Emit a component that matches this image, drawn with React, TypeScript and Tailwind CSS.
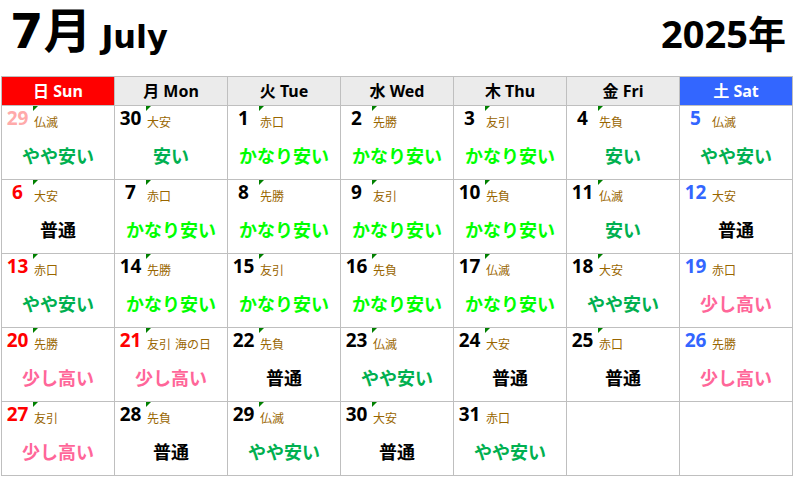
type Day = {
  n: number;
  rokuyo?: string;
  holiday?: string;
  price?: string;
  color?: string;
  mark?: boolean;
};

const priceColor: Record<string, string> = {
  "やや安い": "text-[#00b050]",
  "安い": "text-[#00b050]",
  "かなり安い": "text-[#00ff00]",
  "普通": "text-black",
  "少し高い": "text-[#ff6699]",
};

const heads = [
  { label: "日 Sun", cls: "bg-[#ff0000] text-white" },
  { label: "月 Mon", cls: "bg-[#ebebeb] text-black" },
  { label: "火 Tue", cls: "bg-[#ebebeb] text-black" },
  { label: "水 Wed", cls: "bg-[#ebebeb] text-black" },
  { label: "木 Thu", cls: "bg-[#ebebeb] text-black" },
  { label: "金 Fri", cls: "bg-[#ebebeb] text-black" },
  { label: "土 Sat", cls: "bg-[#3366ff] text-white" },
];

const RED = "text-[#ff0000]";
const BLUE = "text-[#3366ff]";

const weeks: (Day | null)[][] = [
  [
    { n: 29, rokuyo: "仏滅", price: "やや安い", color: "text-[#ffaaaa]", mark: true },
    { n: 30, rokuyo: "大安", price: "安い", mark: true },
    { n: 1, rokuyo: "赤口", price: "かなり安い", mark: true },
    { n: 2, rokuyo: "先勝", price: "かなり安い", mark: true },
    { n: 3, rokuyo: "友引", price: "かなり安い", mark: true },
    { n: 4, rokuyo: "先負", price: "安い", mark: true },
    { n: 5, rokuyo: "仏滅", price: "やや安い", color: BLUE },
  ],
  [
    { n: 6, rokuyo: "大安", price: "普通", color: RED, mark: true },
    { n: 7, rokuyo: "赤口", price: "かなり安い", mark: true },
    { n: 8, rokuyo: "先勝", price: "かなり安い", mark: true },
    { n: 9, rokuyo: "友引", price: "かなり安い", mark: true },
    { n: 10, rokuyo: "先負", price: "かなり安い", mark: true },
    { n: 11, rokuyo: "仏滅", price: "安い", mark: true },
    { n: 12, rokuyo: "大安", price: "普通", color: BLUE },
  ],
  [
    { n: 13, rokuyo: "赤口", price: "やや安い", color: RED, mark: true },
    { n: 14, rokuyo: "先勝", price: "かなり安い", mark: true },
    { n: 15, rokuyo: "友引", price: "かなり安い", mark: true },
    { n: 16, rokuyo: "先負", price: "かなり安い", mark: true },
    { n: 17, rokuyo: "仏滅", price: "かなり安い", mark: true },
    { n: 18, rokuyo: "大安", price: "やや安い", mark: true },
    { n: 19, rokuyo: "赤口", price: "少し高い", color: BLUE },
  ],
  [
    { n: 20, rokuyo: "先勝", price: "少し高い", color: RED, mark: true },
    { n: 21, rokuyo: "友引", holiday: "海の日", price: "少し高い", color: RED, mark: true },
    { n: 22, rokuyo: "先負", price: "普通", mark: true },
    { n: 23, rokuyo: "仏滅", price: "やや安い", mark: true },
    { n: 24, rokuyo: "大安", price: "普通", mark: true },
    { n: 25, rokuyo: "赤口", price: "普通", mark: true },
    { n: 26, rokuyo: "先勝", price: "少し高い", color: BLUE },
  ],
  [
    { n: 27, rokuyo: "友引", price: "少し高い", color: RED, mark: true },
    { n: 28, rokuyo: "先負", price: "普通", mark: true },
    { n: 29, rokuyo: "仏滅", price: "やや安い", mark: true },
    { n: 30, rokuyo: "大安", price: "普通", mark: true },
    { n: 31, rokuyo: "赤口", price: "やや安い" },
    null,
    null,
  ],
];

function Cell({ day }: { day: Day | null }) {
  if (!day) return <div className="bg-white h-[73px]" />;
  return (
    <div className="relative bg-white h-[73px]">
      {day.mark && (
        <span className="absolute left-[31px] top-0 w-[5px] h-[5px] bg-[#008000] [clip-path:polygon(0_0,100%_0,0_100%)]" />
      )}
      <div className="flex items-baseline h-[24px] leading-[24px]">
        <span className={`w-[25px] ml-[3px] text-center text-[19px] font-bold ${day.color ?? "text-black"}`}>
          {day.n}
        </span>
        <span className="ml-[4px] text-[12px] text-[#996600] translate-y-[2px]">
          {day.rokuyo}
          {day.holiday && <span className="ml-[4px]">{day.holiday}</span>}
        </span>
      </div>
      {day.price && (
        <div className={`mt-[14px] text-center text-[18px] leading-[24px] font-bold ${priceColor[day.price]}`}>
          {day.price}
        </div>
      )}
    </div>
  );
}

export default function App() {
  return (
    <div className="w-[794px] h-[478px] bg-white font-['Noto_Sans','Noto_Sans_CJK_JP',sans-serif]">
      {/* Title */}
      <div className="h-[76px] flex items-start justify-between pl-[10px] pr-[8px]">
        <div className="flex items-baseline pt-[3px] font-['DejaVu_Sans','Noto_Sans_CJK_JP',sans-serif]">
          <span className="text-[48px] font-bold leading-[56px]">7月</span>
          <span className="ml-[10px] text-[32px] font-bold leading-[56px]">July</span>
        </div>
        <span className="mt-[8px] text-[38px] font-bold leading-[50px]">2025年</span>
      </div>

      {/* Calendar */}
      <div className="ml-px w-[792px] grid grid-cols-7 gap-px bg-[#bfbfbf] p-px">
        {heads.map((h) => (
          <div
            key={h.label}
            className={`h-[28px] flex items-center justify-center text-[16px] font-bold ${h.cls}`}
          >
            {h.label}
          </div>
        ))}
        {weeks.flat().map((d, i) => (
          <Cell key={i} day={d} />
        ))}
      </div>
    </div>
  );
}
